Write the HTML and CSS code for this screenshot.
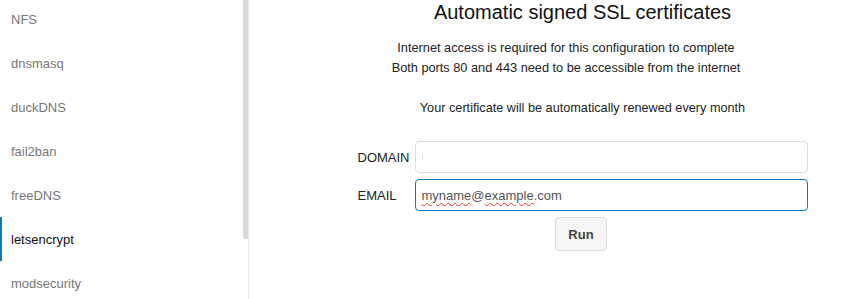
FILE: index.html
```html
<!DOCTYPE html>
<html>
<head>
<meta charset="utf-8">
<link rel="stylesheet" href="styles.css">
</head>
<body>
<div class="app">
  <nav class="sidebar">
    <ul class="menu">
      <li class="item">NFS</li>
      <li class="item">dnsmasq</li>
      <li class="item">duckDNS</li>
      <li class="item">fail2ban</li>
      <li class="item">freeDNS</li>
      <li class="item active">letsencrypt</li>
      <li class="item">modsecurity</li>
    </ul>
    <div class="scrollbar"></div>
  </nav>
  <main class="main">
    <h1 class="title">Automatic signed SSL certificates</h1>
    <div class="info">
      <p class="line">Internet access is required for this configuration to complete</p>
      <p class="line">Both ports 80 and 443 need to be accessible from the internet</p>
    </div>
    <p class="renew">Your certificate will be automatically renewed every month</p>
    <form class="form">
      <div class="row">
        <label class="label">DOMAIN</label>
        <div class="input"><span class="caret"></span></div>
      </div>
      <div class="row">
        <label class="label">EMAIL</label>
        <div class="input focused"><span class="misspelt">myname</span>@<span class="misspelt">example</span>.com</div>
      </div>
      <div class="actions">
        <button type="button" class="btn">Run</button>
      </div>
    </form>
  </main>
</div>
</body>
</html>
```

FILE: styles.css
```css
* { box-sizing: border-box; }
html, body { margin: 0; padding: 0; background: #fff; }
body {
  font-family: "Liberation Sans", Arial, sans-serif;
  font-size: 13px;
  color: #222;
  width: 845px;
  height: 299px;
  overflow: hidden;
}
.app { display: flex; height: 299px; }
.sidebar {
  position: relative;
  width: 249px;
  flex: none;
  border-right: 1px solid #e6e6e6;
  overflow: hidden;
}
.menu { list-style: none; margin: -3px 0 0; padding: 0; }
.item {
  height: 44px;
  display: flex;
  align-items: center;
  padding-left: 9px;
  font-size: 13px;
  color: #777;
  border-left: 2px solid transparent;
}
.item.active { color: #111; border-left-color: #0a7bc2; }
.scrollbar {
  position: absolute;
  top: 0;
  right: 0;
  width: 5px;
  height: 239px;
  background: #d9d9d9;
}
.main {
  flex: 1;
  padding-left: 71px;
  text-align: center;
}
.title {
  margin: 0;
  padding-top: 1px;
  font-size: 20px;
  font-weight: normal;
  line-height: 23px;
  color: #111;
}
.info { padding-right: 33px; margin-top: 14px; }
.line { margin: 0; line-height: 20px; color: #222; font-size: 12.75px; }
.renew { margin: 20px 0 0; line-height: 20px; color: #222; font-size: 12.7px; }
.form { width: 450px; margin: 23px auto 0; }
.row { display: flex; align-items: center; margin-bottom: 6px; }
.label { width: 57px; flex: none; text-align: left; color: #222; }
.input {
  flex: 1;
  height: 32px;
  border: 1px solid #ddd;
  border-radius: 4px;
  text-align: left;
  padding: 0 6px;
  display: flex;
  align-items: center;
  color: #555;
  font-size: 13px;
}
.input.focused { border-color: #0a7bc2; }
.caret { display: inline-block; width: 1px; height: 7px; background: #e8e2d6; }
.misspelt { text-decoration: underline wavy #e33; text-underline-offset: 2px; text-decoration-thickness: 1px; }
.actions { display: flex; justify-content: center; padding-right: 3px; }
.btn {
  width: 52px;
  height: 34px;
  background: #f5f5f5;
  border: 1px solid #ddd;
  border-radius: 4px;
  font-family: "Liberation Sans", Arial, sans-serif;
  font-weight: bold;
  font-size: 13px;
  color: #444;
  padding: 0;
}
```
